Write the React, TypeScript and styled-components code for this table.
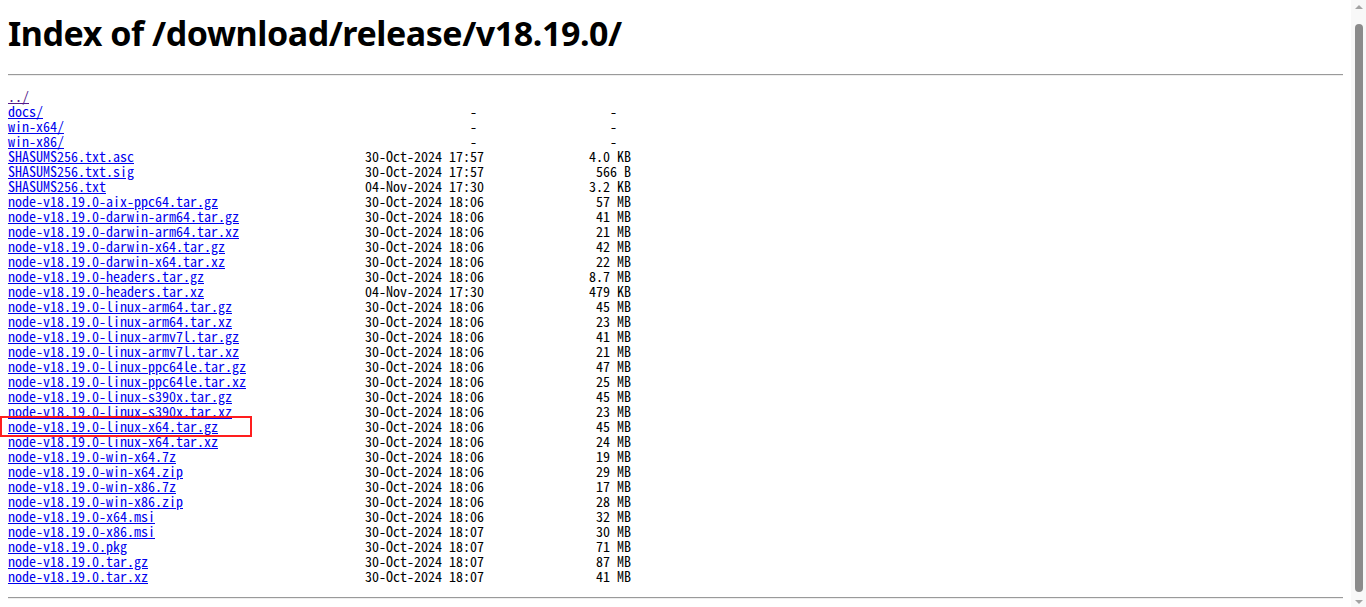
import styled, { createGlobalStyle } from "styled-components";

const GlobalStyle = createGlobalStyle`
  html, body {
    margin: 0;
    padding: 0;
    background: #fff;
  }
  body {
    padding: 0 23px 0 8px;
    font-family: "Noto Sans", "Liberation Sans", sans-serif;
    color: #000;
  }
`;

const Page = styled.div`
  position: relative;
  padding-top: 1px;
  padding-bottom: 12px;
`;

const Heading = styled.h1`
  font-family: "Noto Sans", "Liberation Sans", sans-serif;
  font-size: 34px;
  font-weight: 700;
  line-height: 46px;
  margin: 9px 0 0 0;
  letter-spacing: -0.45px;
`;

const Rule = styled.hr<{ $gap: number }>`
  border: none;
  border-top: 1px solid #9a9a9a;
  border-bottom: 1px solid #eeeeee;
  height: 0;
  margin: ${(p) => p.$gap}px 0 0 0;
`;

const Listing = styled.pre`
  font-family: "Noto Sans Mono CJK SC", "Liberation Mono", monospace;
  font-size: 14px;
  line-height: 15px;
  margin: 13px 0 13px 0;
`;

const Row = styled.div`
  height: 15px;
  white-space: pre;
`;

const FileLink = styled.a<{ $visited?: boolean }>`
  color: ${(p) => (p.$visited ? "#551a8b" : "#0000ee")};
  text-decoration: underline;
`;

const Highlight = styled.div`
  position: absolute;
  left: -8px;
  top: 416px;
  width: 248px;
  height: 17px;
  border: 2px solid #ff1e1e;
  pointer-events: none;
`;

const Scrollbar = styled.div`
  position: fixed;
  top: 0;
  right: 0;
  bottom: 0;
  width: 15px;
  background: #f8f8f8;
  display: flex;
  flex-direction: column;
  align-items: center;
  justify-content: space-between;
  padding: 5px 0 3px;
  box-sizing: border-box;
`;

const Arrow = styled.div<{ $down?: boolean }>`
  width: 0;
  height: 0;
  border-left: 4px solid transparent;
  border-right: 4px solid transparent;
  ${(p) =>
    p.$down
      ? "border-top: 4px solid #a3a3a3;"
      : "border-bottom: 4px solid #a3a3a3;"}
`;

const Thumb = styled.div`
  flex: 1;
  width: 8px;
  margin: 15px 0 8px;
  border-radius: 4px;
  background: #8b8b8b;
`;

type Entry = { name: string; date?: string; size?: string };

const entries: Entry[] = [
  { name: "docs/" },
  { name: "win-x64/" },
  { name: "win-x86/" },
  { name: "SHASUMS256.txt.asc", date: "30-Oct-2024 17:57", size: "4.0 KB" },
  { name: "SHASUMS256.txt.sig", date: "30-Oct-2024 17:57", size: "566 B" },
  { name: "SHASUMS256.txt", date: "04-Nov-2024 17:30", size: "3.2 KB" },
  { name: "node-v18.19.0-aix-ppc64.tar.gz", date: "30-Oct-2024 18:06", size: "57 MB" },
  { name: "node-v18.19.0-darwin-arm64.tar.gz", date: "30-Oct-2024 18:06", size: "41 MB" },
  { name: "node-v18.19.0-darwin-arm64.tar.xz", date: "30-Oct-2024 18:06", size: "21 MB" },
  { name: "node-v18.19.0-darwin-x64.tar.gz", date: "30-Oct-2024 18:06", size: "42 MB" },
  { name: "node-v18.19.0-darwin-x64.tar.xz", date: "30-Oct-2024 18:06", size: "22 MB" },
  { name: "node-v18.19.0-headers.tar.gz", date: "30-Oct-2024 18:06", size: "8.7 MB" },
  { name: "node-v18.19.0-headers.tar.xz", date: "04-Nov-2024 17:30", size: "479 KB" },
  { name: "node-v18.19.0-linux-arm64.tar.gz", date: "30-Oct-2024 18:06", size: "45 MB" },
  { name: "node-v18.19.0-linux-arm64.tar.xz", date: "30-Oct-2024 18:06", size: "23 MB" },
  { name: "node-v18.19.0-linux-armv7l.tar.gz", date: "30-Oct-2024 18:06", size: "41 MB" },
  { name: "node-v18.19.0-linux-armv7l.tar.xz", date: "30-Oct-2024 18:06", size: "21 MB" },
  { name: "node-v18.19.0-linux-ppc64le.tar.gz", date: "30-Oct-2024 18:06", size: "47 MB" },
  { name: "node-v18.19.0-linux-ppc64le.tar.xz", date: "30-Oct-2024 18:06", size: "25 MB" },
  { name: "node-v18.19.0-linux-s390x.tar.gz", date: "30-Oct-2024 18:06", size: "45 MB" },
  { name: "node-v18.19.0-linux-s390x.tar.xz", date: "30-Oct-2024 18:06", size: "23 MB" },
  { name: "node-v18.19.0-linux-x64.tar.gz", date: "30-Oct-2024 18:06", size: "45 MB" },
  { name: "node-v18.19.0-linux-x64.tar.xz", date: "30-Oct-2024 18:06", size: "24 MB" },
  { name: "node-v18.19.0-win-x64.7z", date: "30-Oct-2024 18:06", size: "19 MB" },
  { name: "node-v18.19.0-win-x64.zip", date: "30-Oct-2024 18:06", size: "29 MB" },
  { name: "node-v18.19.0-win-x86.7z", date: "30-Oct-2024 18:06", size: "17 MB" },
  { name: "node-v18.19.0-win-x86.zip", date: "30-Oct-2024 18:06", size: "28 MB" },
  { name: "node-v18.19.0-x64.msi", date: "30-Oct-2024 18:06", size: "32 MB" },
  { name: "node-v18.19.0-x86.msi", date: "30-Oct-2024 18:07", size: "30 MB" },
  { name: "node-v18.19.0.pkg", date: "30-Oct-2024 18:07", size: "71 MB" },
  { name: "node-v18.19.0.tar.gz", date: "30-Oct-2024 18:07", size: "87 MB" },
  { name: "node-v18.19.0.tar.xz", date: "30-Oct-2024 18:07", size: "41 MB" },
];

// name column is 51 chars, date 17, size right-aligned in 21
const tail = (e: Entry) => {
  const pad = " ".repeat(51 - e.name.length);
  if (!e.date) return pad + " ".repeat(15) + "-" + " ".repeat(19) + "-";
  return pad + e.date + (e.size ?? "").padStart(21);
};

export default function App() {
  return (
    <>
      <GlobalStyle />
      <Page>
        <Heading>Index of /download/release/v18.19.0/</Heading>
        <Rule $gap={18} />
        <Listing>
          <Row>
            <FileLink href="#" $visited>
              ../
            </FileLink>
          </Row>
          {entries.map((e) => (
            <Row key={e.name}>
              <FileLink href="#">{e.name}</FileLink>
              {tail(e)}
            </Row>
          ))}
        </Listing>
        <Rule $gap={0} />
        <Highlight />
      </Page>
      <Scrollbar>
        <Arrow />
        <Thumb />
        <Arrow $down />
      </Scrollbar>
    </>
  );
}
